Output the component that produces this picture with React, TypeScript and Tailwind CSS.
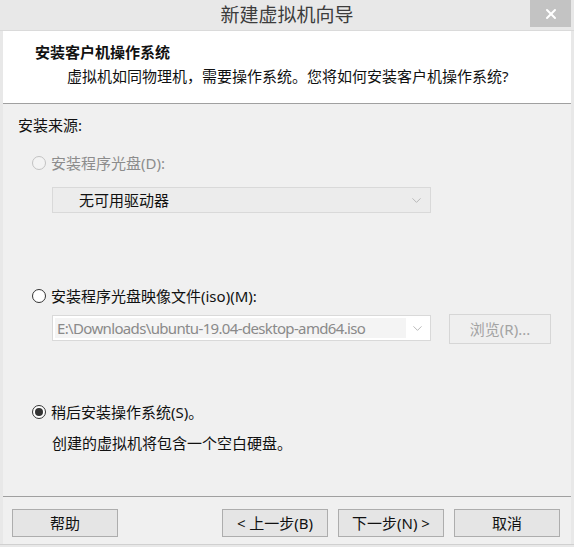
import { ChevronDown, X } from 'lucide-react'

const font = "font-['Noto_Sans','Noto_Sans_CJK_SC',sans-serif]"

function Radio({ checked = false, disabled = false }: { checked?: boolean; disabled?: boolean }) {
    return (
        <span
            className={`flex h-[14px] w-[14px] shrink-0 items-center justify-center rounded-full border ${disabled ? 'border-[#c2c2c2] bg-[#f3f3f3]' : 'border-[#333333] bg-white'}`}
        >
            {checked && <span className="h-[8px] w-[8px] rounded-full bg-[#333333]" />}
        </span>
    )
}

function Button({ label, disabled = false, className = '' }: { label: string; disabled?: boolean; className?: string }) {
    return (
        <div
            className={`flex items-center justify-center border text-[15px] leading-none ${disabled ? 'border-[#d6d6d6] bg-[#efefef] text-[#a3a3a3]' : 'border-[#adadad] bg-[#e5e5e5] text-[#111111]'} ${className}`}
        >
            {label}
        </div>
    )
}

export default function App() {
    return (
        <div className={`${font} flex h-[547px] w-[574px] flex-col bg-[#e8e8e8] text-[#111111]`}>
            {/* title bar */}
            <div className="relative flex h-[31px] shrink-0 items-center justify-center border-b border-[#dadada]">
                <span className="text-[19px] leading-none text-[#3c3c3c]">新建虚拟机向导</span>
                <div className="absolute right-[3px] top-0 flex h-[27px] w-[41px] items-center justify-center bg-[#c3c3c3]">
                    <X size={16} strokeWidth={3} className="text-white" />
                </div>
            </div>

            <div className="mx-[3px] flex flex-1 flex-col bg-[#f0f0f0]">
                {/* header */}
                <div className="flex h-[73px] shrink-0 flex-col border-b border-[#a0a0a0] bg-white pl-[32px] pt-[10px]">
                    <div className="text-[15px] font-bold leading-[22px]">安装客户机操作系统</div>
                    <div className="pl-[32px] pt-[2px] text-[15px] leading-[22px]">虚拟机如同物理机，需要操作系统。您将如何安装客户机操作系统?</div>
                </div>

                {/* content */}
                <div className="flex flex-col pl-[15px] pt-[11px] text-[15px]">
                    <div className="h-[20px] leading-[20px]">安装来源:</div>

                    <div className="mt-[18px] flex h-[20px] items-center gap-[5px] pl-[14px]">
                        <Radio disabled />
                        <span className="leading-[20px] text-[#8c8c8c]">安装程序光盘(D):</span>
                    </div>
                    <div className="ml-[34px] mt-[14px] flex h-[26px] w-[379px] items-center justify-between border border-[#d9d9d9] bg-[#ececec] pl-[26px] pr-[6px]">
                        <span className="leading-none">无可用驱动器</span>
                        <ChevronDown size={15} strokeWidth={1.5} className="text-[#b4b4b4]" />
                    </div>

                    <div className="mt-[73px] flex h-[20px] items-center gap-[5px] pl-[14px]">
                        <Radio />
                        <span className="leading-[20px]">安装程序光盘映像文件(iso)(M):</span>
                    </div>
                    <div className="ml-[34px] mt-[8px] flex items-start gap-[18px]">
                        <div className="mt-[1px] flex h-[26px] w-[379px] items-center border border-[#d9d9d9] bg-white p-[2px]">
                            <div className="flex h-full flex-1 items-center bg-[#f4f4f4] pl-[2px] text-[15px] leading-none tracking-[-0.65px] text-[#8a8a8a]">
                                E:\Downloads\ubuntu-19.04-desktop-amd64.iso
                            </div>
                            <div className="flex w-[22px] items-center justify-center">
                                <ChevronDown size={15} strokeWidth={1.5} className="text-[#b4b4b4]" />
                            </div>
                        </div>
                        <Button label="浏览(R)..." disabled className="h-[30px] w-[102px]" />
                    </div>

                    <div className="mt-[58px] flex h-[20px] items-center gap-[5px] pl-[14px]">
                        <Radio checked />
                        <span className="leading-[20px]">稍后安装操作系统(S)。</span>
                    </div>
                    <div className="ml-[34px] mt-[11px] h-[20px] leading-[20px]">创建的虚拟机将包含一个空白硬盘。</div>
                </div>

                {/* footer */}
                <div className="mt-auto flex h-[48px] items-start border-t border-[#a0a0a0] pl-[9px] pt-[12px]">
                    <Button label="帮助" className="h-[28px] w-[106px]" />
                    <Button label="< 上一步(B)" className="ml-[104px] h-[28px] w-[106px]" />
                    <Button label="下一步(N) >" className="ml-[10px] h-[28px] w-[106px]" />
                    <Button label="取消" className="ml-[10px] h-[28px] w-[106px]" />
                </div>
            </div>
            <div className="h-[3px] shrink-0 border-t border-[#d0d0d0]" />
        </div>
    )
}
